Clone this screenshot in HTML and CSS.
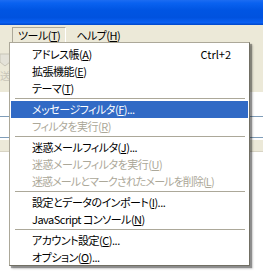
FILE: index.html
```html
<!DOCTYPE html>
<html lang="ja">
<head>
<meta charset="utf-8">
<link rel="stylesheet" href="styles.css">
</head>
<body>
<div class="window">
  <div class="titlebar"></div>
  <div class="menubar">
    <span class="mb-item active"><span>ツール(<u>T</u>)</span></span>
    <span class="mb-item"><span>ヘルプ(<u>H</u>)</span></span>
  </div>
  <div class="toolbar">
    <div class="tb-btn">
      <svg width="12" height="16" viewBox="0 0 12 16"><path d="M0 2 L10 2 L10 10 L5 14 L0 10 Z" fill="#e4e2d8" stroke="#c8c5b8"/></svg>
      <span class="tb-label">送</span>
    </div>
  </div>
  <div class="content">
    <div class="list">
      <div class="list-row"></div>
      <div class="list-row"></div>
    </div>
    <div class="pane"></div>
  </div>

  <div class="popup">
    <div class="mi"><span>アドレス帳(<u>A</u>)</span><span class="key">Ctrl+2</span></div>
    <div class="mi"><span>拡張機能(<u>E</u>)</span></div>
    <div class="mi"><span>テーマ(<u>T</u>)</span></div>
    <div class="sep"></div>
    <div class="mi hl"><span>メッセージフィルタ(<u>F</u>)...</span></div>
    <div class="mi dis"><span>フィルタを実行(<u>R</u>)</span></div>
    <div class="sep"></div>
    <div class="mi"><span>迷惑メールフィルタ(<u>J</u>)...</span></div>
    <div class="mi dis"><span>迷惑メールフィルタを実行(<u>U</u>)</span></div>
    <div class="mi dis tight"><span>迷惑メールとマークされたメールを削除(<u>L</u>)</span></div>
    <div class="sep"></div>
    <div class="mi"><span>設定とデータのインポート(<u>I</u>)...</span></div>
    <div class="mi"><span>JavaScript コンソール(<u>N</u>)</span></div>
    <div class="sep"></div>
    <div class="mi"><span>アカウント設定(<u>C</u>)...</span></div>
    <div class="mi"><span>オプション(<u>O</u>)...</span></div>
  </div>
</div>
</body>
</html>
```
FILE: styles.css
```css
* { box-sizing: border-box; }
html, body { margin: 0; padding: 0; }
body {
  width: 263px;
  height: 279px;
  overflow: hidden;
  font-family: "Noto Sans CJK JP", "Liberation Sans", sans-serif;
  font-size: 11px;
  letter-spacing: -0.5px;
  font-feature-settings: "palt";
  background: #ffffff;
}
.window {
  position: relative;
  width: 263px;
  height: 279px;
  display: flex;
  flex-direction: column;
}
.titlebar {
  height: 25px;
  background: linear-gradient(#1c6cf2 0%, #0a62f0 12%, #0055e3 40%, #0052df 70%, #0a60f2 90%, #0046c8 100%);
}
.menubar {
  height: 17px;
  background: #ece9d8;
  display: flex;
  align-items: stretch;
  padding-left: 12px;
  padding-top: 2px;
  gap: 4px;
}
.mb-item {
  display: flex;
  align-items: center;
  padding: 0 5px;
  line-height: 15px;
  color: #000;
  border: 1px solid transparent;
  border-bottom: none;
  white-space: nowrap;
}
.mb-item.active {
  border-color: #aca899 #ffffff #ffffff #aca899;
}
.toolbar {
  height: 50px;
  background: #ece9d8;
  padding: 10px 0 0 0;
}
.tb-btn {
  width: 20px;
  display: flex;
  flex-direction: column;
  align-items: flex-start;
  gap: 2px;
}
.tb-label { color: #c8c5b8; font-size: 10px; line-height: 12px; margin-left: 0; }
.content {
  flex: 1;
  display: flex;
  flex-direction: column;
}
.list {
  height: 48px;
  background: #fff;
  padding-top: 4px;
}
.list-row {
  height: 21px;
  border-bottom: 1px solid #7f9db9;
}
.pane {
  height: 12px;
  background: #ece9d8;
  border-bottom: 1px solid #d8d4c4;
}
.popup {
  position: absolute;
  left: 9px;
  top: 42px;
  width: 241px;
  height: 224px;
  background: #fff;
  border: 1px solid #aca899;
  border-right-color: #716f64;
  border-bottom-color: #716f64;
  padding: 3px 1px 1px 1px;
  box-shadow: 2px 2px 1px rgba(0,0,0,0.35), 3px 3px 2px rgba(0,0,0,0.15);
}
.mi {
  height: 17px;
  line-height: 17px;
  padding-left: 21px;
  padding-right: 17px;
  display: flex;
  justify-content: space-between;
  white-space: nowrap;
  color: #000;
}
.mi.tight { letter-spacing: -0.9px; }
.key { letter-spacing: 0; }
.mi.hl { background: #316ac5; color: #fff; }
.mi.dis { color: #aca899; }
.sep {
  height: 4px;
  padding-top: 1px;
}
.sep::before {
  content: "";
  display: block;
  height: 1px;
  background: #aca899;
  margin: 0 3px 0 4px;
}
```
